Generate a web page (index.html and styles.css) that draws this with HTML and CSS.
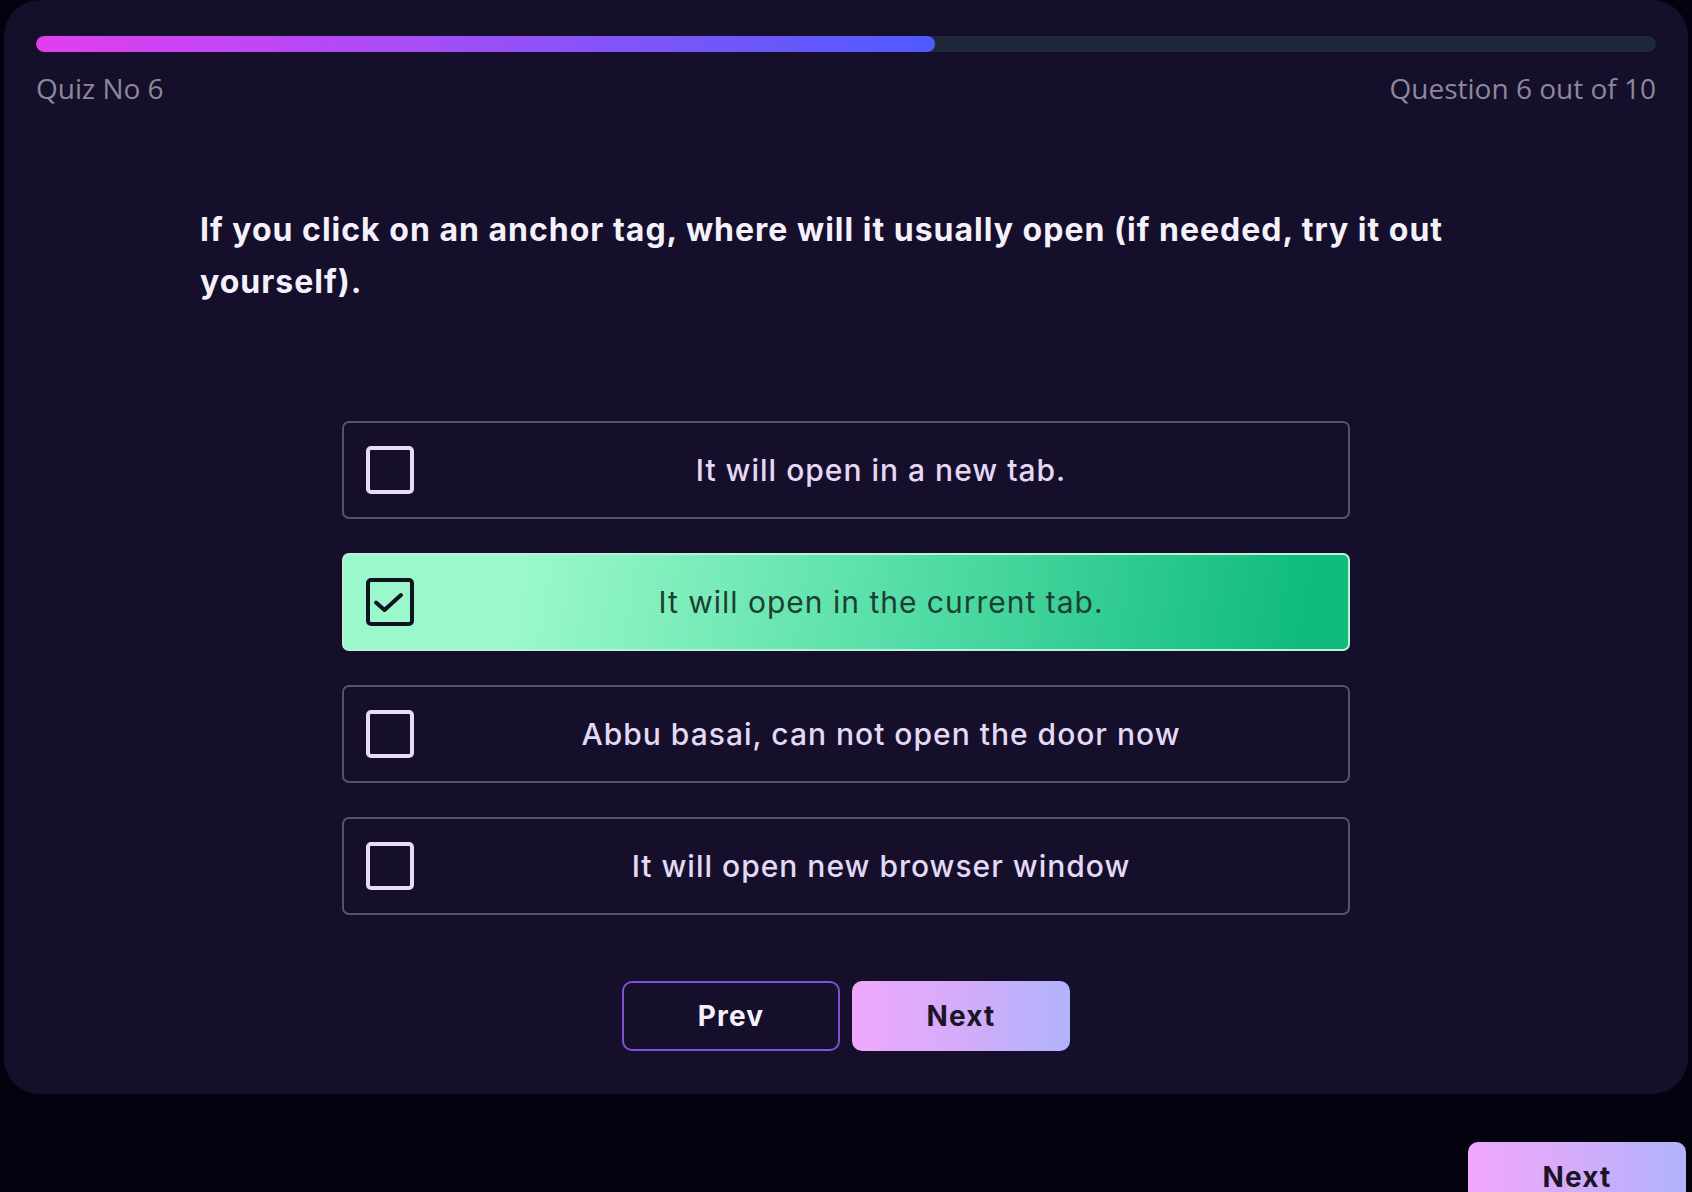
FILE: index.html
```html
<!DOCTYPE html>
<html lang="en">
<head>
<meta charset="utf-8">
<title>Quiz No 6</title>
<link rel="stylesheet" href="styles.css">
</head>
<body>
<div class="page">
  <main class="card">
    <div class="progress"><div class="progress-fill" style="width:55.5%"></div></div>
    <div class="meta">
      <span>Quiz No 6</span>
      <span>Question 6 out of 10</span>
    </div>
    <h1 class="question">If you click on an anchor tag, where will it usually open (if needed, try it out yourself).</h1>
    <ul class="options">
      <li class="option">
        <span class="check"></span>
        <span class="option-text">It will open in a new tab.</span>
      </li>
      <li class="option selected">
        <span class="check">
          <svg viewBox="0 0 40 40" width="40" height="40"><path d="M6 20.5 L14.5 28 L31 13" fill="none" stroke="#0f1420" stroke-width="4" stroke-linecap="round" stroke-linejoin="round"/></svg>
        </span>
        <span class="option-text">It will open in the current tab.</span>
      </li>
      <li class="option">
        <span class="check"></span>
        <span class="option-text">Abbu basai, can not open the door now</span>
      </li>
      <li class="option">
        <span class="check"></span>
        <span class="option-text">It will open new browser window</span>
      </li>
    </ul>
    <div class="nav">
      <button class="btn btn-prev">Prev</button>
      <button class="btn btn-next">Next</button>
    </div>
  </main>
  <div class="footer">
    <button class="btn btn-next">Next</button>
  </div>
</div>
</body>
</html>
```

FILE: styles.css
```css
* { box-sizing: border-box; }

html, body {
  margin: 0;
  padding: 0;
  background: #03020f;
  font-family: "Inter", "DejaVu Sans", sans-serif;
  overflow: hidden;
}

.page {
  padding: 0 4px;
}

.card {
  background: #150f2c;
  border-radius: 36px;
  padding: 36px 32px 43px;
  display: flex;
  flex-direction: column;
}

.progress {
  height: 16px;
  border-radius: 8px;
  background: #1e2839;
  overflow: hidden;
}

.progress-fill {
  height: 100%;
  border-radius: 8px;
  background: linear-gradient(90deg, #e23ef0 0%, #a24ef6 45%, #7a55f8 70%, #4f5bff 100%);
}

.meta {
  display: flex;
  justify-content: space-between;
  margin-top: 18px;
  font-family: "Open Sans", "Inter", sans-serif;
  font-size: 28px;
  line-height: 36px;
  letter-spacing: 0;
  color: #8c8899;
}

.question {
  width: 1292px;
  margin: 98px auto 0;
  font-family: "Inter", sans-serif;
  font-weight: 700;
  font-size: 32px;
  line-height: 52px;
  color: #f4f1fb;
  letter-spacing: 1px;
}

.options {
  list-style: none;
  width: 1008px;
  margin: 113px auto 0;
  padding: 0;
  display: flex;
  flex-direction: column;
  gap: 34px;
}

.option {
  height: 98px;
  border: 2px solid #57516c;
  border-radius: 7px;
  padding-left: 22px;
  display: flex;
  align-items: center;
}

.check {
  width: 48px;
  height: 48px;
  flex: none;
  border: 4px solid #e7dbf6;
  border-radius: 5px;
  display: flex;
  align-items: center;
  justify-content: center;
}

.option-text {
  flex: 1;
  text-align: center;
  font-family: "Inter", sans-serif;
  font-weight: 500;
  font-size: 30px;
  color: #e4d9f4;
  letter-spacing: 1px;
}

.option.selected {
  border-color: #b9f3d6;
  background: linear-gradient(100deg, #9af8ca 18%, #5fe2ad 50%, #10bb7d 95%);
}

.option.selected .check {
  border-color: #0f1420;
}

.option.selected .option-text {
  color: #1d3e33;
  font-weight: 400;
}

.nav {
  display: flex;
  justify-content: center;
  gap: 12px;
  margin-top: 66px;
}

.btn {
  width: 218px;
  height: 70px;
  border-radius: 10px;
  font-family: "Inter", sans-serif;
  font-weight: 700;
  font-size: 28px;
  letter-spacing: 1.2px;
  cursor: pointer;
}

.btn-prev {
  background: transparent;
  border: 2px solid #8150d6;
  color: #f4f1fb;
}

.btn-next {
  border: none;
  background: linear-gradient(90deg, #f0a8fb 0%, #d7abfa 45%, #b0b3fc 100%);
  color: #1a1628;
}

.footer {
  display: flex;
  justify-content: flex-end;
  margin-top: 48px;
  padding-right: 2px;
}
```
